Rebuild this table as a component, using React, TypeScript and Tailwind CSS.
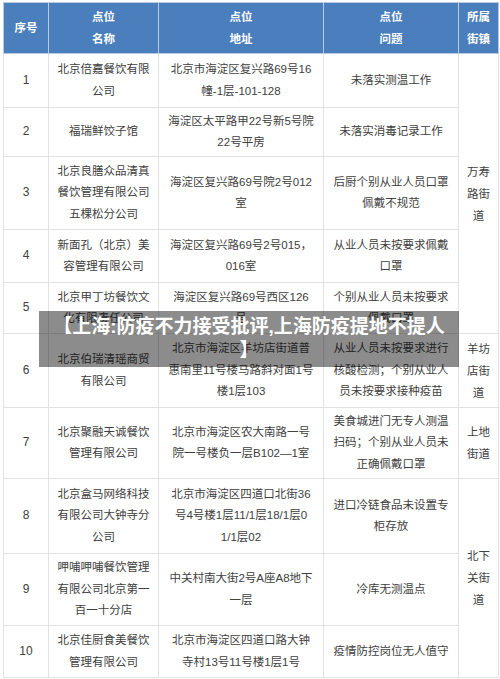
import React from "react";

interface Row {
  no: string;
  name: string[];
  addr: string[];
  issue: string[];
  height: string;
  street?: { lines: string[]; span: number };
}

const rows: Row[] = [
  {
    no: "1",
    name: ["北京倍嘉餐饮有限", "公司"],
    addr: ["北京市海淀区复兴路69号16", "幢-1层-101-128"],
    issue: ["未落实测温工作"],
    height: "h-[54px]",
    street: { lines: ["万寿", "路街", "道"], span: 5 },
  },
  {
    no: "2",
    name: ["福瑞鲜饺子馆"],
    addr: ["海淀区太平路甲22号新5号院", "22号平房"],
    issue: ["未落实消毒记录工作"],
    height: "h-[49px]",
  },
  {
    no: "3",
    name: ["北京良膳众品清真", "餐饮管理有限公司", "五棵松分公司"],
    addr: ["海淀区复兴路69号院2号012", "室"],
    issue: ["后厨个别从业人员口罩", "佩戴不规范"],
    height: "h-[73px]",
  },
  {
    no: "4",
    name: ["新面孔（北京）美", "容管理有限公司"],
    addr: ["海淀区复兴路69号2号015，", "016室"],
    issue: ["从业人员未按要求佩戴", "口罩"],
    height: "h-[53px]",
  },
  {
    no: "5",
    name: ["北京甲丁坊餐饮文", "化有限责任公司"],
    addr: ["海淀区复兴路69号西区126", "号"],
    issue: ["个别从业人员未按要求", "佩戴口罩"],
    height: "h-[51px]",
  },
  {
    no: "6",
    name: ["北京伯瑞清瑶商贸", "有限公司"],
    addr: ["北京市海淀区羊坊店街道普", "惠南里11号楼马路斜对面1号", "楼1层103"],
    issue: ["从业人员未按要求进行", "核酸检测；个别从业人", "员未按要求接种疫苗"],
    height: "h-[74px]",
    street: { lines: ["羊坊", "店街", "道"], span: 1 },
  },
  {
    no: "7",
    name: ["北京聚融天诚餐饮", "管理有限公司"],
    addr: ["北京市海淀区农大南路一号", "院一号楼负一层B102—1室"],
    issue: ["美食城进门无专人测温", "扫码；个别从业人员未", "正确佩戴口罩"],
    height: "h-[71px]",
    street: { lines: ["上地", "街道"], span: 1 },
  },
  {
    no: "8",
    name: ["北京盒马网络科技", "有限公司大钟寺分", "公司"],
    addr: ["北京市海淀区四道口北街36", "号4号楼1层11/1层18/1层0", "1/1层02"],
    issue: ["进口冷链食品未设置专", "柜存放"],
    height: "h-[75px]",
    street: { lines: ["北下", "关街", "道"], span: 3 },
  },
  {
    no: "9",
    name: ["呷哺呷哺餐饮管理", "有限公司北京第一", "百一十分店"],
    addr: ["中关村南大街2号A座A8地下", "一层"],
    issue: ["冷库无测温点"],
    height: "h-[72px]",
  },
  {
    no: "10",
    name: ["北京佳厨食美餐饮", "管理有限公司"],
    addr: ["北京市海淀区四道口路大钟", "寺村13号11号楼1层1号"],
    issue: ["疫情防控岗位无人值守"],
    height: "h-[52px]",
  },
];

const Lines = ({ lines }: { lines: string[] }) => (
  <>
    {lines.map((l, i) => (
      <div key={i} className="whitespace-nowrap">
        {l}
      </div>
    ))}
  </>
);

const bodyCell = "border border-[#e2e2e2] p-0 text-center align-middle";
const headCell = "border border-[#b9cbe4] bg-[#4a7ebd] p-0 text-center align-middle font-bold text-white";

export default function App() {
  return (
    <div
      className="relative h-[679px] w-[500px] overflow-hidden bg-white pl-[3px] pt-[2px]"
      style={{ fontFamily: '"Liberation Sans", "Noto Sans CJK SC", sans-serif' }}
    >
      <table className="w-[495px] table-fixed border-collapse text-[11.5px] leading-[21.5px] text-[#404040]">
        <colgroup>
          <col className="w-[45px]" />
          <col className="w-[110px]" />
          <col className="w-[165px]" />
          <col className="w-[135px]" />
          <col className="w-[40px]" />
        </colgroup>
        <thead>
          <tr className="h-[51px] leading-[22px]">
            <th className={headCell}>序号</th>
            <th className={headCell}>
              <Lines lines={["点位", "名称"]} />
            </th>
            <th className={headCell}>
              <Lines lines={["点位", "地址"]} />
            </th>
            <th className={headCell}>
              <Lines lines={["点位", "问题"]} />
            </th>
            <th className={headCell}>
              <Lines lines={["所属", "街镇"]} />
            </th>
          </tr>
        </thead>
        <tbody>
          {rows.map((r) => (
            <tr key={r.no} className={r.height}>
              <td className={`${bodyCell} text-[12px]`}>{r.no}</td>
              <td className={bodyCell}>
                <Lines lines={r.name} />
              </td>
              <td className={bodyCell}>
                <Lines lines={r.addr} />
              </td>
              <td className={bodyCell}>
                <Lines lines={r.issue} />
              </td>
              {r.street && (
                <td className={`${bodyCell} leading-[22px]`} rowSpan={r.street.span}>
                  <Lines lines={r.street.lines} />
                </td>
              )}
            </tr>
          ))}
        </tbody>
      </table>

      {/* caption banner over the table */}
      <div className="absolute left-[39px] top-[311px] w-[420px] bg-black/45 py-[4px] text-center text-[19px] font-bold leading-[24px] text-white">
        【上海:防疫不力接受批评,上海防疫提地不提人
        <br />】
      </div>
    </div>
  );
}
